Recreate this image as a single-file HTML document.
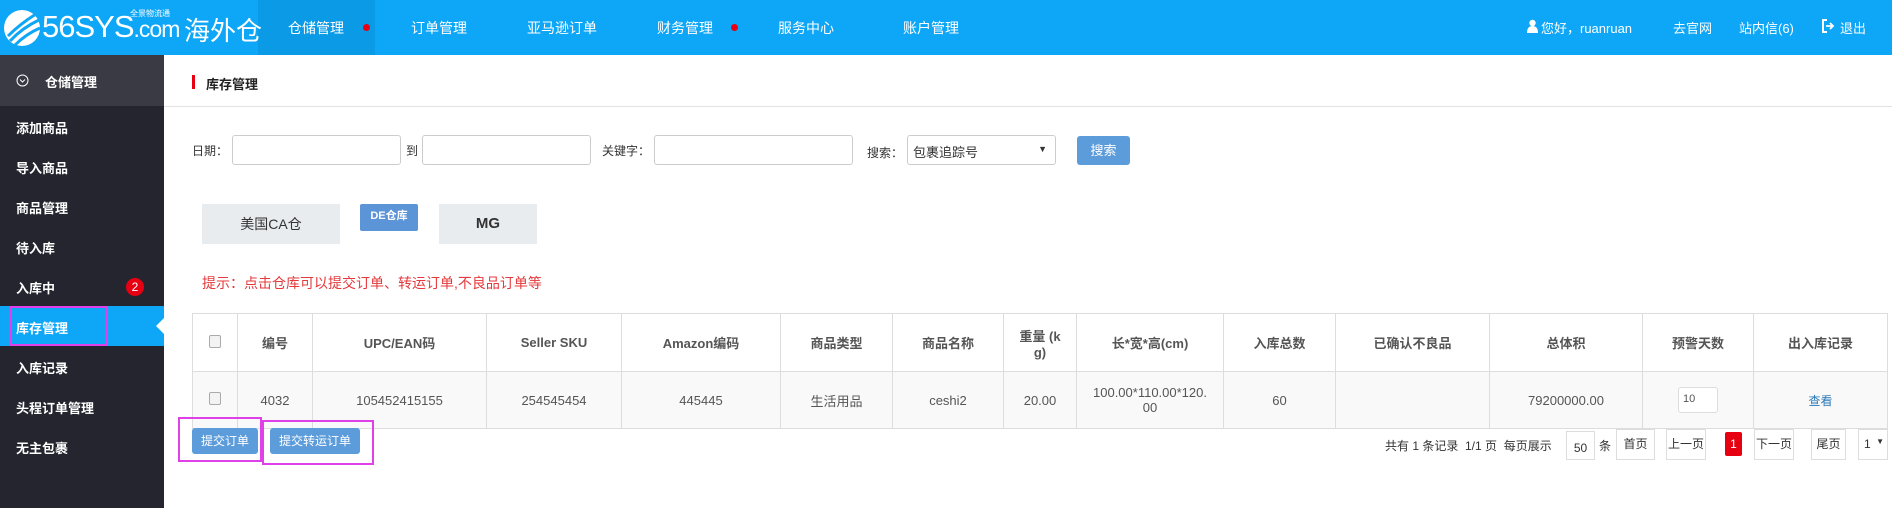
<!DOCTYPE html>
<html><head><meta charset="utf-8"><style>
*{margin:0;padding:0;box-sizing:border-box}
body{width:1892px;height:508px;overflow:hidden;background:#fff;font-family:"Liberation Sans","Noto Sans CJK SC",sans-serif;position:relative;color:#333}
.a{position:absolute;white-space:nowrap}
.hdr{left:0;top:0;width:1892px;height:55px;background:#0ea6f6}
.nav{color:#fff;font-size:14px;top:18px}
.dot{width:7px;height:7px;border-radius:50%;background:#e60012;top:24px}
.side{left:0;top:55px;width:164px;height:453px;background:#25252f}
.si{left:16px;color:#fff;font-size:13px;font-weight:bold}
.inp{border:1px solid #ccc;border-radius:3px;background:#fff;height:30px}
.lbl{font-size:12px;color:#333}
table{border-collapse:collapse;position:absolute;left:192px;top:313px;width:1696px;font-size:13px;color:#555}
td,th{border:1px solid #ddd;text-align:center}
th{height:58px;font-weight:bold}
td{height:57px;background:#f9f9f9}
.cb{display:inline-block;width:12px;height:13px;border:1px solid #aaa;border-radius:2px;background:#f3f3f3}
.btn{background:#5d9cdb;color:#fff;font-size:12px;border-radius:3px;text-align:center}
.pg{border:1px solid #ddd;font-size:12px;color:#333;text-align:center;height:31px;line-height:29px;top:429px;background:#fff}
.mag{border:2px solid #e040e8}
</style></head><body>
<div class="a hdr"></div>
<div class="a" style="left:258px;top:0;width:117px;height:55px;background:#0b9be6"></div>
<svg class="a" style="left:2px;top:6px" width="40" height="44" viewBox="0 0 40 44"><circle cx="20" cy="22" r="18" fill="#fff"/><path d="M6 30 Q18 18 34 8 M8 35 Q20 22 37 14 M13 39 Q24 28 38 22" stroke="#0ea6f6" stroke-width="3" fill="none"/></svg>
<div class="a" style="left:42px;top:9px;color:#fff;font-size:31px;letter-spacing:-1px">56SYS<span style="font-size:23px">.com</span></div>
<div class="a" style="left:130px;top:9px;color:#fff;font-size:8px;line-height:9px">全景物流通</div>
<div class="a" style="left:184px;top:11px;color:#fff;font-size:26px">海外仓</div>
<div class="a nav" style="left:288px">仓储管理</div><div class="a dot" style="left:363px"></div>
<div class="a nav" style="left:411px">订单管理</div>
<div class="a nav" style="left:527px">亚马逊订单</div>
<div class="a nav" style="left:657px">财务管理</div><div class="a dot" style="left:731px"></div>
<div class="a nav" style="left:778px">服务中心</div>
<div class="a nav" style="left:903px">账户管理</div>
<svg class="a" style="left:1527px;top:19px" width="11" height="14" viewBox="0 0 11 14"><circle cx="5.5" cy="4" r="3.2" fill="#fff"/><path d="M0 14 Q0 7 5.5 7 Q11 7 11 14Z" fill="#fff"/></svg>
<div class="a nav" style="left:1541px;font-size:13px">您好，ruanruan</div>
<div class="a nav" style="left:1673px;font-size:13px">去官网</div>
<div class="a nav" style="left:1739px;font-size:13px">站内信(6)</div>
<svg class="a" style="left:1822px;top:19px" width="13" height="14" viewBox="0 0 13 14"><path d="M5 1H1V13H5" stroke="#fff" stroke-width="2" fill="none"/><path d="M4 7H10M8 4L11 7L8 10" stroke="#fff" stroke-width="1.8" fill="none"/></svg>
<div class="a nav" style="left:1840px;font-size:13px">退出</div>
<div class="a side"></div>
<div class="a" style="left:0;top:55px;width:164px;height:51px;background:#3a3a44"></div>
<svg class="a" style="left:16px;top:74px" width="13" height="13" viewBox="0 0 13 13"><circle cx="6.5" cy="6.5" r="5.5" stroke="#fff" fill="none"/><path d="M4 5.5L6.5 8L9 5.5" stroke="#fff" fill="none"/></svg>
<div class="a si" style="left:45px;top:72px">仓储管理</div>
<div class="a si" style="top:118px">添加商品</div>
<div class="a si" style="top:158px">导入商品</div>
<div class="a si" style="top:198px">商品管理</div>
<div class="a si" style="top:238px">待入库</div>
<div class="a si" style="top:278px">入库中</div>
<div class="a" style="left:126px;top:278px;width:18px;height:18px;border-radius:50%;background:#e60012;color:#fff;font-size:12px;text-align:center;line-height:18px">2</div>
<div class="a" style="left:0;top:306px;width:164px;height:40px;background:#0ea6f6"></div>
<div class="a" style="left:156px;top:318px;width:0;height:0;border-top:8px solid transparent;border-bottom:8px solid transparent;border-right:8px solid #fff"></div>
<div class="a si" style="top:318px">库存管理</div>
<div class="a mag" style="left:9px;top:306px;width:98px;height:40px"></div>
<div class="a si" style="top:358px">入库记录</div>
<div class="a si" style="top:398px">头程订单管理</div>
<div class="a si" style="top:438px">无主包裹</div>
<div class="a" style="left:192px;top:75px;width:3px;height:14px;background:#e60012"></div>
<div class="a" style="left:206px;top:74px;font-size:13px;font-weight:bold;color:#222">库存管理</div>
<div class="a" style="left:164px;top:106px;width:1728px;height:1px;background:#e3e3e3"></div>
<div class="a lbl" style="left:192px;top:142px">日期：</div>
<div class="a inp" style="left:232px;top:135px;width:169px"></div>
<div class="a lbl" style="left:406px;top:142px">到</div>
<div class="a inp" style="left:422px;top:135px;width:169px"></div>
<div class="a lbl" style="left:602px;top:142px">关键字：</div>
<div class="a inp" style="left:654px;top:135px;width:199px"></div>
<div class="a lbl" style="left:867px;top:144px">搜索：</div>
<div class="a inp" style="left:907px;top:135px;width:149px;font-size:13px;padding:6px 5px;color:#333">包裹追踪号<span style="position:absolute;right:8px;top:8px;font-size:9px">▼</span></div>
<div class="a btn" style="left:1077px;top:136px;width:53px;height:29px;line-height:29px;font-size:13px">搜索</div>
<div class="a" style="left:202px;top:204px;width:138px;height:40px;background:#e9ecef;font-size:14px;text-align:center;line-height:40px;color:#333">美国CA仓</div>
<div class="a" style="left:360px;top:204px;width:58px;height:27px;background:#5b95d8;border-radius:2px;color:#fff;font-size:11px;font-weight:bold;text-align:center;line-height:24px">DE仓库</div>
<div class="a" style="left:439px;top:204px;width:98px;height:40px;background:#e9ecef;font-size:15px;font-weight:bold;text-align:center;line-height:40px;color:#333">MG</div>
<div class="a" style="left:202px;top:273px;font-size:14px;color:#e4393c">提示：点击仓库可以提交订单、转运订单,不良品订单等</div>
<table>
<tr><th style="width:45px"><span class="cb"></span></th><th style="width:75px">编号</th><th style="width:174px">UPC/EAN码</th><th style="width:135px">Seller SKU</th><th style="width:159px">Amazon编码</th><th style="width:112px">商品类型</th><th style="width:111px">商品名称</th><th style="width:73px">重量 (k<br>g)</th><th style="width:147px">长*宽*高(cm)</th><th style="width:112px">入库总数</th><th style="width:154px">已确认不良品</th><th style="width:153px">总体积</th><th style="width:111px">预警天数</th><th>出入库记录</th></tr>
<tr><td><span class="cb"></span></td><td>4032</td><td>105452415155</td><td>254545454</td><td>445445</td><td>生活用品</td><td>ceshi2</td><td>20.00</td><td>100.00*110.00*120.<br>00</td><td>60</td><td></td><td>79200000.00</td><td><span style="display:inline-block;width:40px;height:26px;border:1px solid #ddd;border-radius:3px;background:#fff;text-align:left;padding:5px 4px;font-size:11px">10</span></td><td style="color:#2a7ab8;font-size:12px">查看</td></tr>
</table>
<div class="a btn" style="left:192px;top:428px;width:66px;height:26px;line-height:26px">提交订单</div>
<div class="a btn" style="left:270px;top:428px;width:90px;height:26px;line-height:26px">提交转运订单</div>
<div class="a mag" style="left:178px;top:417px;width:84px;height:45px"></div>
<div class="a mag" style="left:262px;top:420px;width:112px;height:45px"></div>
<div class="a" style="left:1385px;top:437px;font-size:12px;color:#333">共有 1 条记录&nbsp; 1/1 页&nbsp; 每页展示</div>
<div class="a pg" style="left:1566px;width:29px;top:431px;height:29px;line-height:32px">50</div>
<div class="a" style="left:1599px;top:437px;font-size:12px">条</div>
<div class="a pg" style="left:1616px;width:39px">首页</div>
<div class="a pg" style="left:1666px;width:40px">上一页</div>
<div class="a" style="left:1725px;top:432px;width:17px;height:24px;background:#e60012;color:#fff;font-size:12px;text-align:center;line-height:24px;border-radius:2px">1</div>
<div class="a pg" style="left:1754px;width:40px">下一页</div>
<div class="a pg" style="left:1811px;width:35px">尾页</div>
<div class="a pg" style="left:1858px;width:30px;text-align:left;padding-left:5px">1<span style="font-size:8px;position:absolute;right:3px;top:-3px">▼</span></div>
</body></html>
